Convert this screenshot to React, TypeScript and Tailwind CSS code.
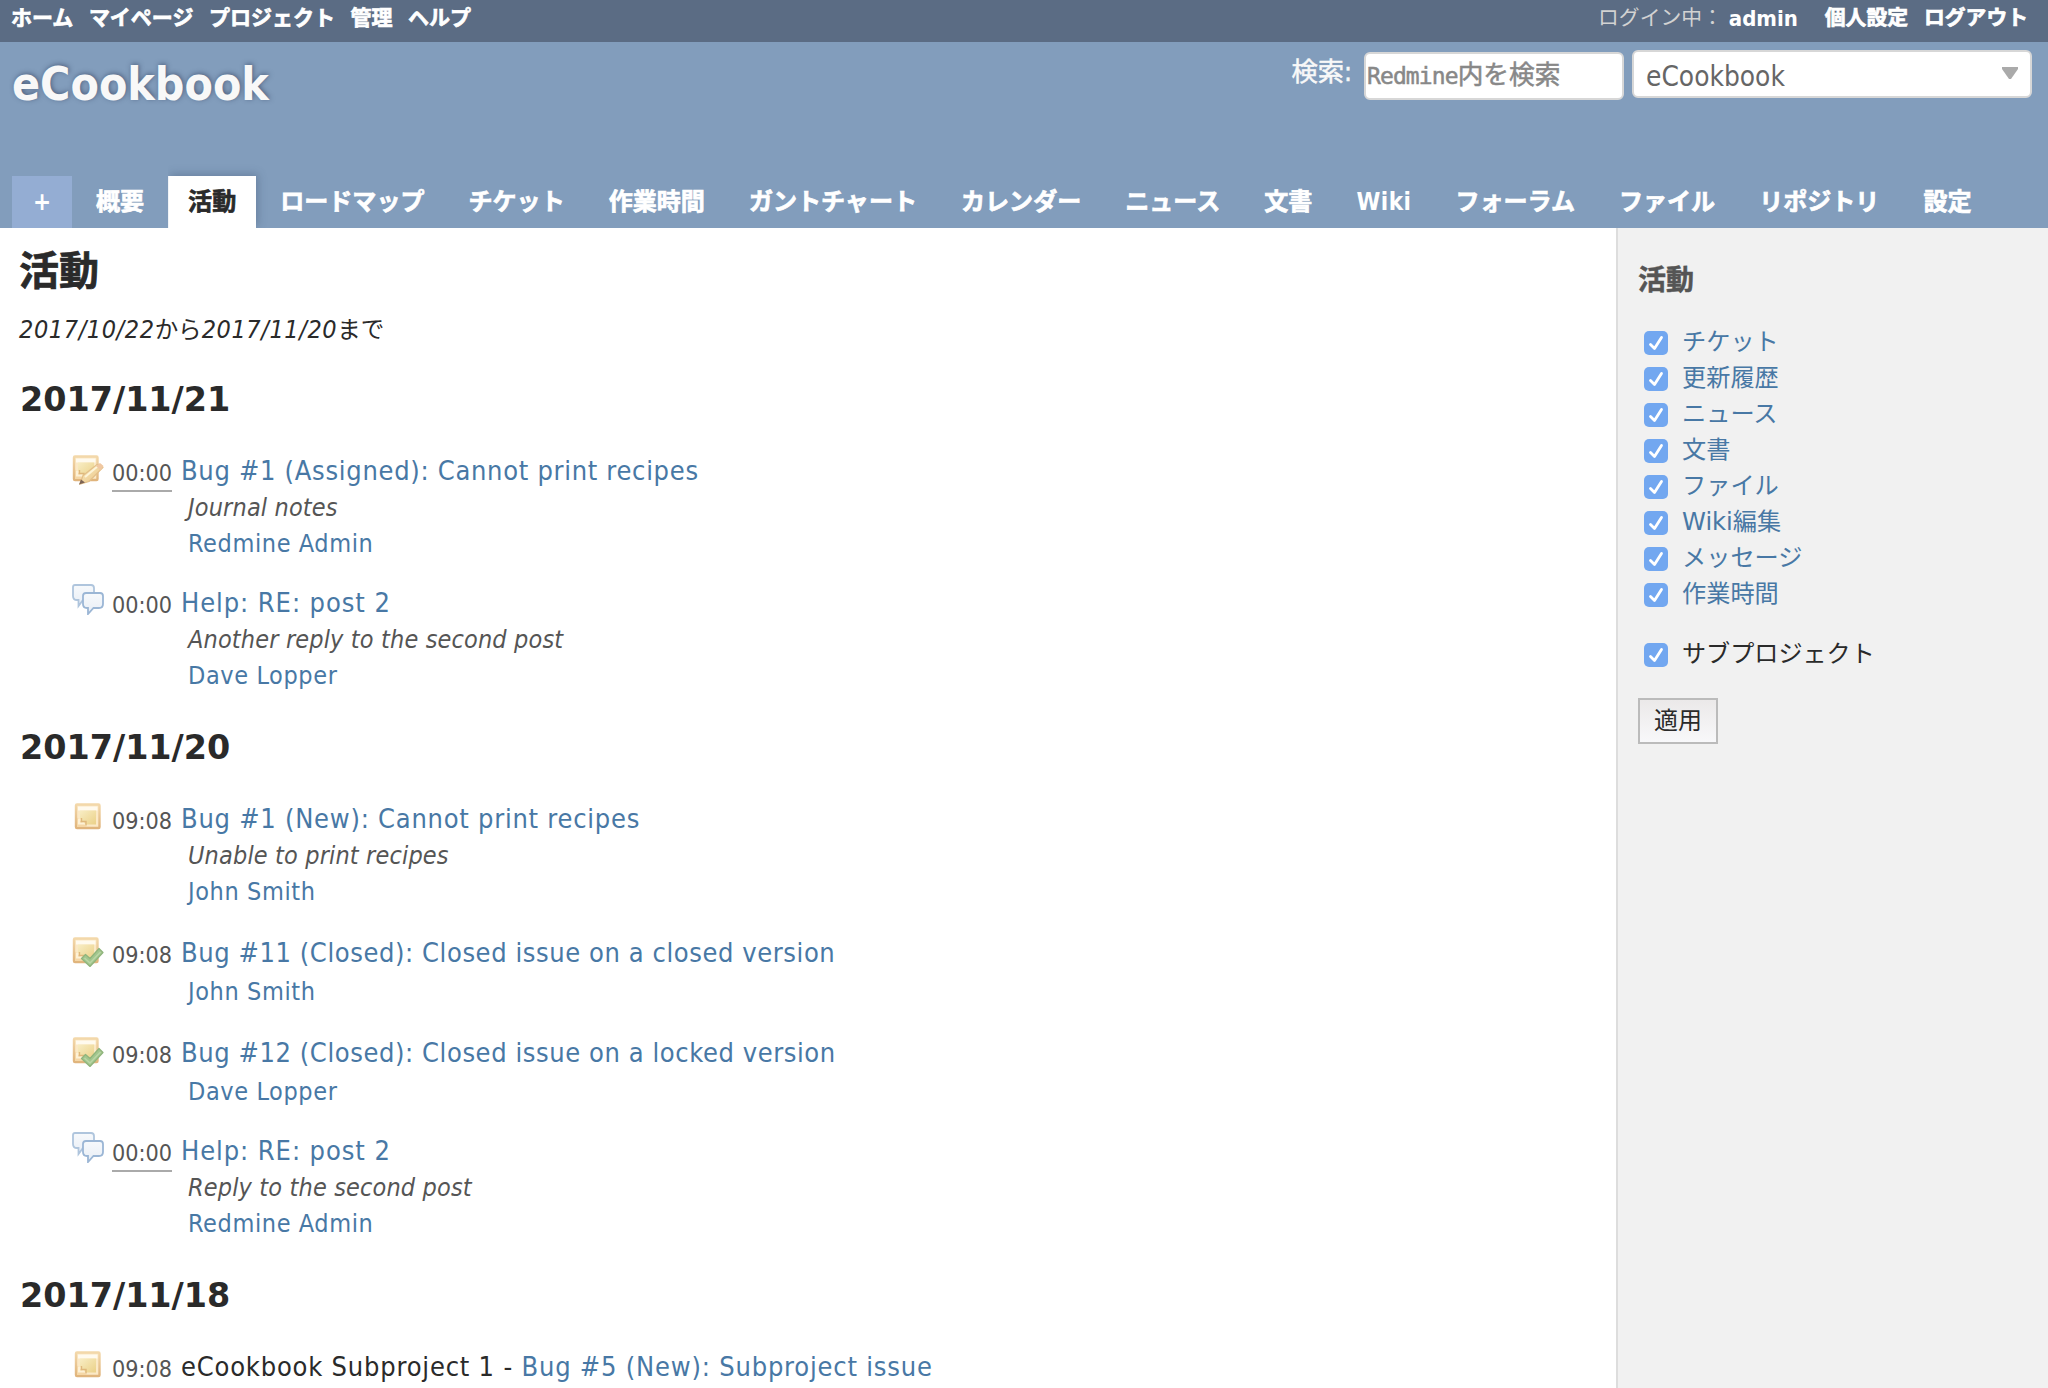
import type { ReactNode } from "react";

type IconKind = "ticket" | "ticketEdit" | "ticketClosed" | "comments";

function Note({ x = 0 }: { x?: number }) {
  return (
    <g transform={`translate(${x} 0.500)`}>
      <rect x="3" y="3" width="23.500" height="23.500" rx="1" fill="#fbe9c6" stroke="url(#noteEdge)" strokeWidth="2.400" />
      <rect x="5" y="5" width="19.500" height="4" fill="#fffaee" />
      <path d="M7 9H23V23H13L7 17Z" fill="url(#noteFill)" />
      <path d="M4 16L14 25.500H4Z" fill="#f5d7a6" />
      <path d="M6 17.500V22H11.500" fill="none" stroke="#fdf1d6" strokeWidth="2" />
      <path d="M8.500 16.500V20H13V24" fill="none" stroke="#dfb87c" strokeWidth="1.400" />
    </g>
  );
}

function EntryIcon({ kind }: { kind: IconKind }) {
  return (
    <svg
      viewBox="0 0 32 32"
      className={kind === "comments" ? "-mt-[2px] block size-8 shrink-0" : "block size-8 shrink-0"}
    >
      <defs>
        <linearGradient id="noteEdge" x1="0" y1="0" x2="0" y2="1">
          <stop offset="0" stopColor="#f3d8aa" />
          <stop offset="1" stopColor="#e0b47c" />
        </linearGradient>
        <linearGradient id="noteFill" x1="0" y1="0" x2="1" y2="1">
          <stop offset="0" stopColor="#f8edc4" />
          <stop offset="1" stopColor="#ebd188" />
        </linearGradient>
        <linearGradient id="bubbleFill" x1="0" y1="0" x2="0" y2="1">
          <stop offset="0" stopColor="#f7f9fc" />
          <stop offset="1" stopColor="#e8eef5" />
        </linearGradient>
        <linearGradient id="pencilFill" x1="0" y1="0" x2="1" y2="1">
          <stop offset="0" stopColor="#fbeec4" />
          <stop offset="1" stopColor="#e8c080" />
        </linearGradient>
      </defs>
      {kind === "ticket" && <Note x={1} />}
      {kind === "ticketEdit" && (
        <>
          <Note x={-1} />
          <path d="M8 31L11 22.500L25 11.500Q29 10.500 31 14.500L17 28.500Z" fill="url(#pencilFill)" stroke="#e3bf88" strokeWidth="1.200" />
          <path d="M13 24L26 13" stroke="#fdf4d8" strokeWidth="2" />
          <path d="M24 13L28.500 17.500L31.500 13L28 10Z" fill="#f0c8a2" />
          <path d="M7 31.500L9 26.500L13 29.500Z" fill="#7d6455" />
        </>
      )}
      {kind === "ticketClosed" && (
        <>
          <Note x={-1} />
          <path d="M9.500 23.500L13.500 19.500L18 23.500L27 13.500L31 17.500L18 31.500Z" fill="#a3c68e" stroke="#8fb47c" strokeWidth="1.200" strokeLinejoin="round" />
          <path d="M12.500 23L18 28L28.500 17" fill="none" stroke="#bad7a6" strokeWidth="1.500" />
        </>
      )}
      {kind === "comments" && (
        <>
          <path d="M3 2H19Q22 2 22 5V14Q22 17 19 17H11L6.500 23V17H5Q1 17 1 13V4Q1 2 3 2Z" fill="url(#bubbleFill)" stroke="#afc5dd" strokeWidth="1.800" />
          <path d="M14 10H28Q31 10 31 13V21Q31 25 27 25H21.500L16 31V25H15Q11 25 11 21V13Q11 10 14 10Z" fill="url(#bubbleFill)" stroke="#9bb6d5" strokeWidth="1.800" />
        </>
      )}
    </svg>
  );
}

interface EntryProps {
  icon: IconKind;
  time: string;
  underlined?: boolean;
  project?: string;
  title: string;
  tracking: string;
  description?: string;
  author?: string;
}

function Entry({ icon, time, underlined, project, title, tracking, description, author }: EntryProps) {
  return (
    <div className={icon === "comments" ? "not-first:mt-6" : "not-first:mt-[26px]"}>
      <div className={description ? "flex h-9" : "flex h-[38px]"}>
        <EntryIcon kind={icon} />
        <span
          className={
            underlined
              ? "ml-2 h-[39px] w-[60px] border-b-2 border-[#aaa] text-[23.200px] leading-[40px] text-[#555]"
              : "ml-2 h-[39px] w-[60px] text-[23.200px] leading-[40px] text-[#555]"
          }
        >
          {time}
        </span>
        <span className={`ml-[9px] text-[27px] leading-9 whitespace-nowrap ${tracking}`}>
          {project && <span>{project} - </span>}
          <a className="text-[#4878a5]">{title}</a>
        </span>
      </div>
      {description && (
        <p className="ml-[116px] h-9 text-[25px] leading-[37px] tracking-[0.150px] text-[#555] italic">{description}</p>
      )}
      {author && (
        <p className="ml-[116px] h-9 text-[25px] leading-[37px] tracking-[0.600px]">
          <a className="text-[#4878a5]">{author}</a>
        </p>
      )}
    </div>
  );
}

function Day({ date, children }: { date: string; children: ReactNode }) {
  return (
    <section className="mb-[35px]">
      <h3 className="mb-[33px] font-['DejaVu_Sans','Noto_Sans_CJK_JP',sans-serif] text-[33.400px] leading-10 font-bold">
        {date}
      </h3>
      <div className="pl-[52px]">{children}</div>
    </section>
  );
}

function Check() {
  return (
    <span className="mt-[2px] flex size-6 shrink-0 items-center justify-center rounded-[5px] bg-[#72a7f0]">
      <svg viewBox="0 0 24 24" className="size-6">
        <path d="M6.500 13.500L10.500 17.500L17.500 6.500" fill="none" stroke="#fff" strokeWidth="2.800" strokeLinecap="round" strokeLinejoin="round" />
      </svg>
    </span>
  );
}

const tabs = [
  "概要", "活動", "ロードマップ", "チケット", "作業時間", "ガントチャート", "カレンダー", "ニュース",
  "文書", "Wiki", "フォーラム", "ファイル", "リポジトリ", "設定",
];

const filters = ["チケット", "更新履歴", "ニュース", "文書", "ファイル", "Wiki編集", "メッセージ", "作業時間"];

export default function App() {
  return (
    <div className="flex h-[1388px] w-[2048px] flex-col overflow-hidden bg-white font-['DejaVu_Sans_Condensed','Noto_Sans_CJK_JP',sans-serif] text-[#2a2a2a]">
      <nav className="flex h-[42px] shrink-0 justify-between bg-[#5b6c84] pr-5 pl-[11px] text-[20.800px] leading-[37px] font-bold text-white">
        <div className="flex gap-[15.500px] text-[21px] [-webkit-text-stroke:0.7px]">
          {["ホーム", "マイページ", "プロジェクト", "管理", "ヘルプ"].map((t) => (
            <a key={t}>{t}</a>
          ))}
        </div>
        <div className="flex">
          <span className="font-normal text-[#d2d2d2]">ログイン中：</span>
          <a className="ml-[6px] w-[70px] text-[22px]">admin</a>
          <a className="ml-[26px] [-webkit-text-stroke:0.7px]">個人設定</a>
          <a className="ml-4 [-webkit-text-stroke:0.7px]">ログアウト</a>
        </div>
      </nav>

      <header className="flex h-[186px] shrink-0 flex-col justify-between bg-[#829dbc] px-3">
        <div className="flex justify-between">
          <h1 className="pt-[14px] text-[46px] leading-[56px] font-bold text-[#f8f8f8] [text-shadow:1px_-1px_5px_rgba(50,65,95,0.65)]">
            eCookbook
          </h1>
          <div className="flex pr-1">
            <label className="mt-2 mr-3 text-[26.300px] leading-11 text-[#f8f8f8] [-webkit-text-stroke:0.5px]">検索:</label>
            <div className="mt-[10px] mr-2 h-12 w-[260px] rounded-md border-2 border-[#d7d7d7] bg-white pl-px font-['DejaVu_Sans_Mono','Noto_Sans_CJK_JP',monospace] text-[25.700px] leading-[43px] text-[#888] [-webkit-text-stroke:0.5px]">
              <span className="text-[23px] tracking-[-0.900px]">Redmine</span>内を検索
            </div>
            <div className="mt-2 flex h-12 w-[400px] items-start justify-between rounded-md border-2 border-[#d7d7d7] bg-white pr-3 pl-3 text-[27.800px] leading-[50px] text-[#666]">
              eCookbook
              <svg viewBox="0 0 16 12" className="mt-[15px] h-3 w-4">
                <path d="M0 0H16V2L9 12H7L0 2Z" fill="#aaa" />
              </svg>
            </div>
          </div>
        </div>
        <div className="flex gap-1 text-[24.060px] leading-[52px] font-bold text-white">
          <a className="flex h-[52px] w-[60px] justify-center bg-[#94add3]">+</a>
          {tabs.map((t) => (
            <a
              key={t}
              className={
                t === "活動"
                  ? "h-[52px] bg-white px-5 text-[#2a2a2a] shadow-[2px_-2px_8px_rgba(60,80,110,0.35)] [-webkit-text-stroke:0.7px] [clip-path:inset(-12px_-12px_0_0)]"
                  : t === "Wiki"
                    ? "h-[52px] px-5 tracking-[0.500px]"
                    : "h-[52px] px-5 [-webkit-text-stroke:0.7px]"
              }
            >
              {t}
            </a>
          ))}
        </div>
      </header>

      <div className="flex min-h-0 flex-1">
        <main className="w-[1616px] shrink-0 pt-[13px] pl-5">
          <h2 className="-ml-px text-[40px] leading-[60px] font-bold [-webkit-text-stroke:0.7px]">活動</h2>
          <p className="mt-[11px] mb-8 -ml-px h-9 text-[24px] leading-9 italic">
            <span className="text-[25px] tracking-[0.600px]">2017/10/22</span>
            <span className="text-[23.500px] not-italic">から</span>
            <span className="text-[25px] tracking-[0.600px]">2017/11/20</span>
            <span className="text-[23.500px] not-italic">まで</span>
          </p>
          <Day date="2017/11/21">
            <Entry icon="ticketEdit" time="00:00" underlined title="Bug #1 (Assigned): Cannot print recipes" tracking="tracking-[0.700px]" description="Journal notes" author="Redmine Admin" />
            <Entry icon="comments" time="00:00" title="Help: RE: post 2" tracking="tracking-[0.920px]" description="Another reply to the second post" author="Dave Lopper" />
          </Day>
          <Day date="2017/11/20">
            <Entry icon="ticket" time="09:08" title="Bug #1 (New): Cannot print recipes" tracking="tracking-[0.750px]" description="Unable to print recipes" author="John Smith" />
            <Entry icon="ticketClosed" time="09:08" title="Bug #11 (Closed): Closed issue on a closed version" tracking="tracking-[0.580px]" author="John Smith" />
            <Entry icon="ticketClosed" time="09:08" title="Bug #12 (Closed): Closed issue on a locked version" tracking="tracking-[0.580px]" author="Dave Lopper" />
            <Entry icon="comments" time="00:00" underlined title="Help: RE: post 2" tracking="tracking-[0.920px]" description="Reply to the second post" author="Redmine Admin" />
          </Day>
          <Day date="2017/11/18">
            <Entry icon="ticket" time="09:08" project="eCookbook Subproject 1" title="Bug #5 (New): Subproject issue" tracking="tracking-[0.800px]" />
          </Day>
        </main>

        <aside className="flex-1 border-l-2 border-[#ddd] bg-[#f1f1f1] pt-[33px] pl-5">
          <h3 className="text-[28px] leading-[40px] font-bold text-[#555] [-webkit-text-stroke:0.5px]">活動</h3>
          <ul className="mt-7 pl-[6px] font-['DejaVu_Sans','Noto_Sans_CJK_JP',sans-serif]">
            {filters.map((f) => (
              <li key={f} className="flex h-9 gap-[14px] text-[24.200px] leading-[26px]">
                <Check />
                <a className="text-[#4878a5]">{f}</a>
              </li>
            ))}
          </ul>
          <label className="mt-6 flex h-9 gap-[14px] pl-[6px] text-[24.100px] leading-[26px]">
            <Check />
            サブプロジェクト
          </label>
          <button className="mt-[21px] flex h-[46px] w-20 justify-center border-2 border-[#bbb] bg-linear-to-b from-[#ebe9e9] to-[#f8f8fa] text-2xl leading-[43px]">
            適用
          </button>
        </aside>
      </div>
    </div>
  );
}
